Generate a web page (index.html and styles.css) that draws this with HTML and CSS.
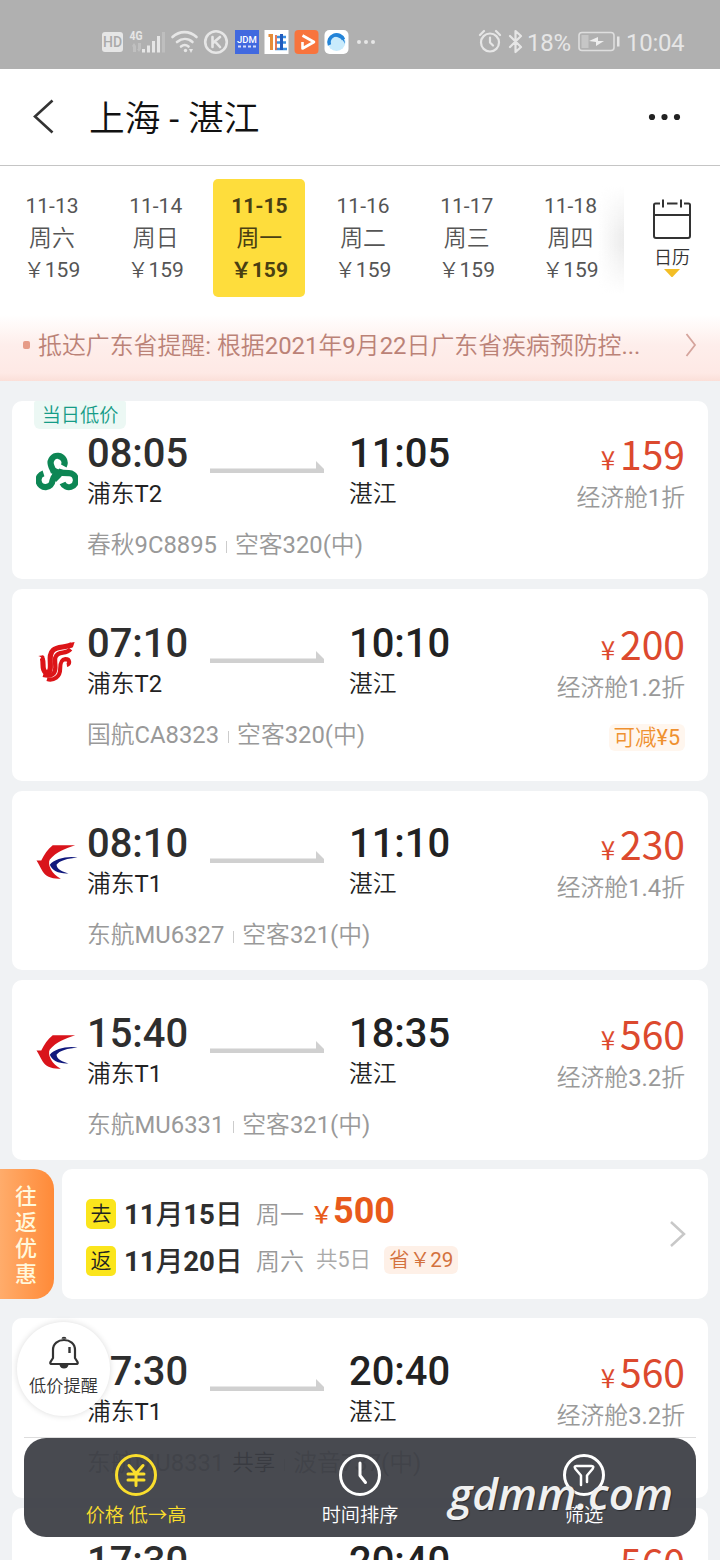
FILE: index.html
```html
<!DOCTYPE html>
<html lang="zh-CN">
<head>
<meta charset="utf-8">
<title>上海 - 湛江</title>
<link rel="stylesheet" href="styles.css">
</head>
<body>
<svg class="defs" width="0" height="0">
  <symbol id="arrow" viewBox="0 0 114 12"><path d="M0 7.6h106V0l8 8v4H0z" fill="#d0d0d0"/></symbol>
  <symbol id="spring" viewBox="0 0 42 40">
    <g fill="none" stroke="#0d8654" stroke-width="6.200">
      <path d="M27.800 14A7 7 0 1 0 14.800 12.500C15.600 16 17.500 18 18 21"/>
      <path d="M7.500 21.400A7 7 0 1 0 16.500 28.500C17 26 18.500 24 20.500 22"/>
      <path d="M26.500 31A7 7 0 1 0 32.500 21.200C30 21.200 26 21 22 19.500"/>
    </g>
    <path d="M16.500 14.500l5 2.500 8 2-4.500 6-5 5-4-5z" fill="#0d8654"/>
  </symbol>
  <symbol id="airchina" viewBox="0 0 40 42">
    <g fill="none" stroke="#dc1418">
      <path d="M3.500 16C6.500 18 4.500 26 6 29c2 5 6.500 4 7 -2 .5-7-2-14 3-18.500C21 4 29 6.500 35.500 2.500" stroke-width="5.400"/>
      <path d="M5.500 34.500C14 37 18.300 33 18.300 27c0-7-2-11.500 3-14.500 4.500-2 9-.5 13-5" stroke-width="4.600"/>
      <path d="M9.500 39C17 41 23.300 36 23.300 28.500c0-6.500 1-10 5.500-10.500 5 0 5 5.500 1.500 6" stroke-width="4.300"/>
    </g>
    <path d="M.3 14.800c2.500-.8 4.500-.8 6.500 0l-2 4c-1-2.500-2-3.500-4.500-4zM34 .9L38.500 0l-1.800 5.500-3 1z" fill="#dc1418"/>
  </symbol>
  <symbol id="eastern" viewBox="0 0 44 36">
    <path fill="#d9141b" d="M17.500.5H41C31 4 21 7.500 14.500 15.500c-3 5 2 15.500 11.500 20-10 .5-16-2.500-19-7.500C4 23 3 20 .5 16.500h5C9 10 12 4.500 17.500.5z"/>
    <path fill="#10187c" d="M43.500 13.500C34 11.500 19 14.500 14.500 21c2.500 6.500 9.500 9.500 19.500 9-6-1.500-12-4-12.500-9 2.500-4.500 12-7 22-7.500z"/>
  </symbol>
</svg>
<div class="screen">
  <header class="status">
    <svg class="status-icons" width="280" height="30" viewBox="0 0 280 30">
      <rect x="1" y="5" width="21" height="20" rx="3" fill="#e6e6e6"/>
      <text x="11.500" y="20.300" font-size="14" font-weight="500" text-anchor="middle" fill="#aaa">HD</text>
      <text x="28.500" y="13" font-size="12" font-weight="700" textLength="13" lengthAdjust="spacingAndGlyphs" fill="#e6e6e6">4G</text>
      <g fill="#e6e6e6"><path d="M31 19l2-3 2 3v6h-3v-5zM37 16h3v6l-2 3-2-3h1z" opacity=".3"/>
      <rect x="41" y="22" width="3" height="3.500"/><rect x="46" y="18.500" width="3" height="7"/><rect x="51" y="14" width="3" height="11.500"/><rect x="56" y="9" width="3" height="16.500"/><rect x="61" y="5" width="3" height="20.500" opacity=".25"/></g>
      <g fill="none" stroke="#e6e6e6" stroke-width="2.600" stroke-linecap="round"><path d="M71.500 10c7-6.500 17-6.500 24 0M76 15c5-4 11-4 15.500 0M80 19.500c2.500-2 5-2 7.500 0"/><circle cx="115" cy="15" r="10.800"/><path d="M111.500 10v10M119 10l-7 6M114 14.500l5 5.500"/></g>
      <circle cx="84.500" cy="23.500" r="1.700" fill="#e6e6e6"/><path d="M88 22l2 4 2-4z" fill="#e6e6e6"/>
      <rect x="134" y="3" width="24" height="24" fill="#4169df"/><text x="146" y="15.500" font-size="9.500" font-weight="500" text-anchor="middle" fill="#fff">JDM</text><path d="M137 19.500h19" stroke="#d5ddfa" stroke-width="2" stroke-dasharray="3 2"/>
      <g transform="translate(1)"><rect x="162.500" y="3" width="24" height="24" fill="#fff"/><path d="M166.500 8.500h3v14.500" fill="none" stroke="#e58c38" stroke-width="3"/><path d="M175 10h9M174 15.500h10M173 22h12" stroke="#3a8fe0" stroke-width="2.500"/><path d="M179.500 7v16" stroke="#205bbd" stroke-width="3"/><path d="M174 8v15" stroke="#e26e48" stroke-width="1.800"/>
      <rect x="192.500" y="3" width="24" height="24" rx="4" fill="#f8743d"/><path d="M200.500 15v6.500L212 15 200.500 8.500" fill="none" stroke="#fff" stroke-width="2.600" stroke-linejoin="round"/>
      <rect x="222.500" y="3" width="24" height="24" rx="5" fill="#fff"/><circle cx="234.500" cy="15" r="9" fill="#c9ebfc"/><path d="M227.500 18a7.500 7.500 0 0 1 14-5.500" fill="none" stroke="#2484d8" stroke-width="3.500"/><path d="M231 9c6-3 12 1 12 8-2-5-6-7-12-8z" fill="#2484d8"/></g>
      <g fill="#e6e6e6"><circle cx="258" cy="15" r="2"/><circle cx="265" cy="15" r="2"/><circle cx="272" cy="15" r="2"/></g>
    </svg>
    <div class="status-right">
      <svg width="46" height="28" viewBox="0 0 46 28"><g fill="none" stroke="#e6e6e6" stroke-width="2.200" stroke-linecap="round" stroke-linejoin="round"><circle cx="12" cy="14.500" r="9"/><path d="M12 9.500v5l3 3M2 7l4-4M22 7l-4-4M32 8l11 11-5.500 5V3l5.500 5-11 11"/></g></svg>
      <span class="pct">18%</span>
      <svg class="battery" width="42" height="22" viewBox="0 0 42 22"><rect x="1" y="1.500" width="35" height="18" rx="3" fill="none" stroke="#dedede" stroke-width="1.600"/><path d="M3.500 4h7v13h-7z" fill="#c6c6c6"/><path d="M11 10l9-4v4h6l-8 5v-4z" fill="#eee"/><path d="M39 5.500h2.500v10H39z" fill="#e6e6e6"/></svg>
      <span class="clock">10:04</span>
    </div>
  </header>

  <nav class="title-bar">
    <svg width="24" height="36" viewBox="0 0 24 36"><path d="M21.500 1.500L4 17.500l17.500 16" fill="none" stroke="#333" stroke-width="2.600"/></svg>
    <h1>上海 - 湛江</h1>
    <svg class="more" width="34" height="8" viewBox="0 0 34 8" fill="#222"><circle cx="4" cy="4" r="3.100"/><circle cx="16.500" cy="4" r="3.100"/><circle cx="29" cy="4" r="3.100"/></svg>
  </nav>

  <section class="dates">
    <div class="days">
      <div class="day"><span>11-13</span><span class="wk">周六</span><span>￥159</span></div>
      <div class="day"><span>11-14</span><span class="wk">周日</span><span>￥159</span></div>
      <div class="day on"><span>11-15</span><span class="wk">周一</span><span>￥159</span></div>
      <div class="day"><span>11-16</span><span class="wk">周二</span><span>￥159</span></div>
      <div class="day"><span>11-17</span><span class="wk">周三</span><span>￥159</span></div>
      <div class="day"><span>11-18</span><span class="wk">周四</span><span>￥159</span></div>
    </div>
    <div class="calendar">
      <svg width="40" height="42" viewBox="0 0 40 42"><path d="M8 5.500H3.500Q2 5.500 2 7V38q0 2 2 2h32q2 0 2-2V7Q38 5.500 36.500 5.500H32M15 5.500h10.500M2 17h36M11 1.500v8M29 1.500v8" fill="none" stroke="#333" stroke-width="2"/></svg>
      <span>日历</span>
      <svg width="18" height="9" viewBox="0 0 18 9"><path d="M1 0h16L10 7.500q-1 1-2 0z" fill="#f3be26"/></svg>
    </div>
  </section>

  <section class="notice">
    <i></i><span>抵达广东省提醒: 根据2021年9月22日广东省疾病预防控...</span>
    <svg width="12" height="26" viewBox="0 0 12 26"><path d="M1.500 2l8.500 11L1.500 24" fill="none" stroke="#d5a49c" stroke-width="1.800"/></svg>
  </section>

  <main class="list">
    <article class="card low">
      <em class="tag">当日低价</em>
      <svg class="logo"><use href="#spring"/></svg>
      <div class="dep"><b>08:05</b><span>浦东T2</span></div>
      <svg class="arrow"><use href="#arrow"/></svg>
      <div class="arr"><b>11:05</b><span>湛江</span></div>
      <div class="price"><b><small>¥</small>159</b><span>经济舱1折</span></div>
      <p>春秋9C8895<i></i>空客320(中)</p>
    </article>
    <article class="card promo">
      <svg class="logo"><use href="#airchina"/></svg>
      <div class="dep"><b>07:10</b><span>浦东T2</span></div>
      <svg class="arrow"><use href="#arrow"/></svg>
      <div class="arr"><b>10:10</b><span>湛江</span></div>
      <div class="price"><b><small>¥</small>200</b><span>经济舱1.2折</span></div>
      <p>国航CA8323<i></i>空客320(中)<mark>可减¥5</mark></p>
    </article>
    <article class="card">
      <svg class="logo"><use href="#eastern"/></svg>
      <div class="dep"><b>08:10</b><span>浦东T1</span></div>
      <svg class="arrow"><use href="#arrow"/></svg>
      <div class="arr"><b>11:10</b><span>湛江</span></div>
      <div class="price"><b><small>¥</small>230</b><span>经济舱1.4折</span></div>
      <p>东航MU6327<i></i>空客321(中)</p>
    </article>
    <article class="card tall">
      <svg class="logo"><use href="#eastern"/></svg>
      <div class="dep"><b>15:40</b><span>浦东T1</span></div>
      <svg class="arrow"><use href="#arrow"/></svg>
      <div class="arr"><b>18:35</b><span>湛江</span></div>
      <div class="price"><b><small>¥</small>560</b><span>经济舱3.2折</span></div>
      <p>东航MU6331<i></i>空客321(中)</p>
    </article>

    <section class="round">
      <div class="side">往返优惠</div>
      <div class="round-card">
        <div class="legs">
          <div class="leg"><i>去</i><b>11<u>月</u>15<u>日</u></b><span class="wd">周一</span><strong><small>￥</small>500</strong></div>
          <div class="leg"><i>返</i><b>11<u>月</u>20<u>日</u></b><span class="wd">周六</span><span class="stay">共5日</span><mark>省￥29</mark></div>
        </div>
        <svg width="18" height="28" viewBox="0 0 18 28"><path d="M2 2l13 12L2 26" fill="none" stroke="#c8c8c8" stroke-width="2.500"/></svg>
      </div>
    </section>

    <article class="card tall">
      <svg class="logo"><use href="#eastern"/></svg>
      <div class="dep"><b>17:30</b><span>浦东T1</span></div>
      <svg class="arrow"><use href="#arrow"/></svg>
      <div class="arr"><b>20:40</b><span>湛江</span></div>
      <div class="price"><b><small>¥</small>560</b><span>经济舱3.2折</span></div>
      <p>东航MU8331<span class="share">共享</span><i></i>波音737(中)</p>
    </article>
    <article class="card tall">
      <svg class="logo"><use href="#eastern"/></svg>
      <div class="dep"><b>17:30</b></div>
      <svg class="arrow"><use href="#arrow"/></svg>
      <div class="arr"><b>20:40</b></div>
      <div class="price"><b>560</b></div>
    </article>
  </main>

  <div class="alert">
    <svg width="30" height="33" viewBox="0 0 30 33"><path d="M12.500 2.800a2.500 2 0 0 1 5 0zM10.500 29h9q-1 3.500-4.500 3.500T10.500 29z" fill="#333"/><path d="M4 19.500V14C4 7.500 9 4 15 4s11 3.500 11 10v8l2.500 4q.8 2-1.500 2H3q-2.300 0-1.500-2L4 22z" fill="none" stroke="#333" stroke-width="2.200"/><path d="M20.500 11v6" stroke="#333" stroke-width="2.400"/></svg>
    <span>低价提醒</span>
  </div>

  <footer class="sort">
    <div class="opt on"><svg viewBox="0 0 42 42"><circle cx="21" cy="21" r="19.500"/><path d="M14 11.500l7 8 7-8M21 19.500v12M13 20h16M13 26h16"/></svg><span>价格 低→高</span></div>
    <div class="opt"><svg viewBox="0 0 42 42"><circle cx="21" cy="21" r="19.500"/><path d="M21 9v12.500l5.500 7"/></svg><span>时间排序</span></div>
    <div class="opt"><svg viewBox="0 0 42 42"><circle cx="21" cy="21" r="19.500"/><path d="M18 31V21.500l-5.500-6.500q-2-3 1-3h15q3 0 1 3L24 21.500V28" stroke-width="2.500"/></svg><span>筛选</span></div>
  </footer>
  <div class="watermark">gdmm.com</div>
</div>
</body>
</html>
```
FILE: styles.css
```css
* { box-sizing: border-box; }
body { margin: 0; font-family: Roboto, "Noto Sans CJK SC DemiLight", "Noto Sans CJK SC", sans-serif; color: #222; }
.defs { position: absolute; }
.screen { position: relative; width: 720px; height: 1560px; overflow: hidden; background: #f0f2f4; }
i, em { font-style: normal; }
svg { display: block; flex: none; }

.status { display: flex; justify-content: space-between; height: 69px; padding: 27px 35px 0 101px; background: #b0b0b0; color: #e6e6e6; }
.status-right { display: flex; height: 30px; align-items: center; font-size: 24px; }
.status-right span { padding-top: 2px; }
.status-right .pct { margin-left: 3px; letter-spacing: -.3px; width: 48px; }
.battery { margin: 0 6px 0 3px; }
.clock { width: 59px; letter-spacing: -.3px; }

.title-bar { display: flex; align-items: center; height: 97px; padding: 0 38px 0 31px; background: #fff; border-bottom: 1px solid #c5c5c5; }
.title-bar h1 { margin: 3px 0 0 34px; font-size: 35.700px; font-weight: 400; line-height: 50px; color: #111; white-space: nowrap; }
.title-bar .more { margin-left: auto; }

.dates { display: flex; height: 149px; background: #fff; }
.days { position: relative; display: flex; width: 624px; padding-top: 13px; }
.days::after { content: ""; position: absolute; right: 0; top: 20px; width: 26px; height: 108px; background: linear-gradient(90deg, rgba(235,235,235,0), #ececec); -webkit-mask-image: linear-gradient(transparent, #000 45%, #000 55%, transparent); mask-image: linear-gradient(transparent, #000 45%, #000 55%, transparent); }
.day { display: flex; flex-direction: column; align-items: center; width: 92px; height: 118px; margin-right: 11.7px; padding-top: 11px; font-size: 21px; line-height: 32px; color: #555; border-radius: 5px; flex: none; }
.day:first-child { margin-left: 6px; }
.day .wk { padding-top: 1px; margin-bottom: -1px; font-size: 22.900px; }
.day span { white-space: nowrap; }
.day.on { background: #fedd3c; color: #4a3f12; font-weight: 700; font-family: Roboto, "Noto Sans CJK SC", sans-serif; }
.day.on .wk { font-weight: 400; }
.calendar { display: flex; flex-direction: column; align-items: center; width: 96px; padding-top: 32px; font-size: 18px; color: #333; }
.calendar span { line-height: 28px; margin: 4px 0 -3px; }

.notice { display: flex; align-items: center; height: 66px; padding: 0 23px 6px; background: linear-gradient(#fff, #feeeeb 45%, #fee9e5 88%, #fbdfd8); color: #bb8277; font-size: 23.900px; line-height: 34px; }
.notice i { width: 7px; height: 8px; border-radius: 2px; background: #e69b87; margin-right: 8px; }
.notice span { padding-top: 1px; white-space: nowrap; }
.notice svg { margin-left: auto; }

.list { display: flex; flex-direction: column; padding: 20px 12px 0; }
.card { position: relative; display: grid; grid-template-columns: 51px 123px 139px 120px 1fr; grid-template-rows: 90px 1fr; flex: none; height: 179px; margin-bottom: 10px; padding: 32px 23px 0 24px; border-radius: 10px; background: #fff; }
.card.low { height: 178px; }
.card.promo { height: 192px; padding-top: 34px; }
.card.tall { height: 180px; padding-top: 33px; }
.tag { position: absolute; left: 22px; top: 0; width: 92px; height: 28px; font-size: 19.200px; line-height: 29px; text-align: center; color: #159c87; background: #ecf8f4; border-radius: 2px 2px 6px 6px; }
.logo { width: 42px; height: 40px; margin-top: 19px; }
.dep, .arr, .price { display: flex; flex-direction: column; }
.dep b, .arr b { font-size: 39.900px; font-weight: 500; line-height: 42px; }
.dep b { color: #2e2e2e; }
.dep span, .arr span { margin-top: 1px; font-size: 23.800px; line-height: 36px; }
.arrow { width: 114px; height: 12px; margin-top: 28px; }
.price { align-items: flex-end; white-space: nowrap; }
.price b { margin-top: -3px; font: 400 39px/46px "Noto Sans CJK SC", sans-serif; color: #dc492e; }
.price small { font-size: 26px; margin-right: 5px; }
.price span { margin-top: -2px; font-size: 23.800px; line-height: 36px; color: #999; }
.card p { display: flex; align-items: center; grid-column: 2 / -1; margin: 3px 0 0; height: 38px; font-size: 23.800px; line-height: 36px; color: #999; white-space: nowrap; }
.card p i { width: 1px; height: 12px; margin: 4px 8px 0 9px; background: #ccc; }
.card p mark { margin: 5px 0 0 auto; padding: 0 5px; font-size: 21.500px; line-height: 27px; color: #ef9130; background: #fff6ee; border-radius: 6px; }
.card .share { margin-left: 8px; color: #333; font-size: 21.500px; }

.round { display: flex; justify-content: space-between; height: 130px; margin: -1px 0 19px -12px; }
.side { display: flex; align-items: center; width: 54px; padding: 0 16px 3px 15px; font-family: "Noto Sans CJK SC", sans-serif; font-size: 22px; line-height: 26px; font-weight: 500; color: #fff8dc; word-break: break-all; background: linear-gradient(90deg, #ffac6b, #ff8a38); border-radius: 0 20px 20px 0; }
.round-card { display: flex; align-items: center; justify-content: space-between; width: 646px; padding: 0 21px 0 24px; background: #fff; border-radius: 10px; }
.legs { padding-top: 3px; }
.leg { display: flex; align-items: center; height: 47px; white-space: nowrap; }
.leg i { margin-top: 3px; width: 30px; height: 30px; border-radius: 5px; background: #fbe51c; font-size: 21px; line-height: 30px; text-align: center; }
.leg b { width: 119px; margin-left: 8px; font-family: Roboto, "Noto Sans CJK SC", sans-serif; font-size: 27.600px; font-weight: 700; color: #2e2e2e; }
.leg u { text-decoration: none; font-weight: 500; }
.leg .wd { margin-left: 13px; font-size: 24px; color: #999; }
.leg strong { margin: 3px 0 0 6px; font-family: Roboto, "Noto Sans CJK SC", sans-serif; font-size: 36px; line-height: 40px; color: #e85a1b; }
.leg small { font-size: 23px; font-weight: 500; }
.leg .stay { margin: -3px 0 0 12px; font-size: 21.500px; color: #aaa; }
.leg mark { margin: 2px 0 0 13px; padding: 0 5px; font-size: 20.600px; line-height: 28px; color: #d3713d; background: #fef0e7; border-radius: 6px; }

.alert { position: absolute; left: 17px; top: 1322px; display: flex; flex-direction: column; align-items: center; width: 93px; height: 94px; padding-top: 14px; border-radius: 50%; background: #fff; box-shadow: 0 0 6px rgba(0,0,0,.14); font-size: 17.200px; line-height: 25px; color: #333; }
.alert span { margin-top: 5px; white-space: nowrap; }
.alert svg { height: 33px; }

.sort { position: absolute; left: 24px; top: 1438px; display: flex; width: 672px; height: 99px; background: rgba(58,60,67,.93); border-radius: 22px; }
.sort::before { content: ""; position: absolute; left: 0; right: 0; top: -1px; height: 1px; background: #ddd; }
.opt { display: flex; flex: 1; flex-direction: column; align-items: center; padding-top: 16px; color: #fff; font-size: 19.200px; line-height: 28px; }
.opt.on { color: #fade2d; }
.opt span { margin-top: 6px; white-space: nowrap; }
.opt svg { width: 42px; height: 42px; fill: none; stroke: currentColor; stroke-width: 3; stroke-linecap: round; stroke-linejoin: round; }
.watermark { position: absolute; left: 449px; top: 1461px; font: italic 600 44px/64px "Open Sans", sans-serif; color: #f0f0f0; text-shadow: 1px 1px 1px rgba(0,0,0,.45); }
```
